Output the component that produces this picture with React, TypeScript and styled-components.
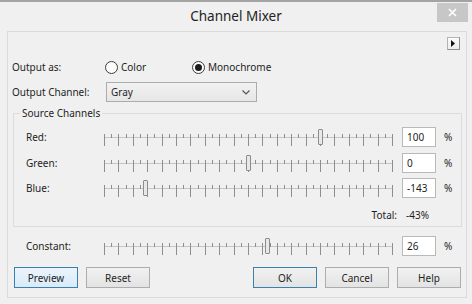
import React from "react";
import styled, { createGlobalStyle } from "styled-components";

const GlobalStyle = createGlobalStyle`
  body {
    margin: 0;
    background: #f0f0f0;
    font-family: "Noto Sans", "Open Sans", sans-serif;
    font-size: 10px;
    color: #1e1e1e;
  }
`;

const Window = styled("div")`
  width: 472px;
  height: 304px;
  box-sizing: border-box;
  border-top: 2px solid #a3a3a3;
  background: #f0f0f0;
  display: flex;
  flex-direction: column;
`;

const TitleBar = styled("div")`
  height: 29px;
  flex-shrink: 0;
  display: grid;
  grid-template-columns: 1fr auto 1fr;
  align-items: start;
`;

const Title = styled("div")`
  grid-column: 2;
  font-size: 13.5px;
  line-height: 28px;
  color: #222;
`;

const CloseButton = styled("div")`
  grid-column: 3;
  justify-self: end;
  margin: 1px 4px 0 0;
  width: 31px;
  height: 19px;
  background: #c7c7c7;
  display: flex;
  align-items: center;
  justify-content: center;
`;

const Panel = styled("div")`
  flex: 1;
  margin: 0 5px 6px 7px;
  border: 1px solid #dadada;
  background: #f0f0f0;
  display: flex;
  flex-direction: column;
`;

const PanelHeader = styled("div")`
  display: flex;
  justify-content: flex-end;
  padding: 5px 6px 0 0;
`;

const ExpandButton = styled("div")`
  width: 13px;
  height: 13px;
  box-sizing: border-box;
  border: 1px solid #b4b4b4;
  border-right-color: #8f8f8f;
  border-bottom-color: #8f8f8f;
  background: linear-gradient(#fbfbfb, #ececec);
  display: flex;
  align-items: center;
  justify-content: center;
`;

const FormRow = styled("div")<{ $top: number }>`
  display: flex;
  align-items: center;
  height: 20px;
  margin-top: ${(p) => p.$top}px;
  padding-left: 4px;
`;

const FormLabel = styled("div")`
  width: 93px;
  flex-shrink: 0;
`;

const RadioOption = styled("label")<{ $width?: number }>`
  display: flex;
  align-items: center;
  gap: 3px;
  width: ${(p) => (p.$width ? `${p.$width}px` : "auto")};
`;

const RadioCircle = styled("span")<{ $checked?: boolean }>`
  width: 13px;
  height: 13px;
  box-sizing: border-box;
  border-radius: 50%;
  border: 1px solid #3a3a3a;
  background: #fcfcfc;
  display: flex;
  align-items: center;
  justify-content: center;
  &::after {
    content: "";
    display: ${(p) => (p.$checked ? "block" : "none")};
    width: 7px;
    height: 7px;
    border-radius: 50%;
    background: #1c1c1c;
  }
`;

const SelectBox = styled("div")`
  margin-left: 1px;
  width: 151px;
  height: 20px;
  box-sizing: border-box;
  border: 1px solid #acacac;
  background: linear-gradient(#f2f2f2, #e6e6e6);
  display: flex;
  align-items: center;
  justify-content: space-between;
  padding: 0 6px 0 4px;
`;

const Group = styled("fieldset")`
  margin: 3px 4px 0 5px;
  padding: 6px 0 3px 6px;
  border: 1px solid #dcdcdc;
  min-width: 0;
`;

const Legend = styled("legend")`
  padding: 0 2px;
  font-size: 10px;
  line-height: 16px;
`;

const ChannelList = styled("div")`
  display: flex;
  flex-direction: column;
  gap: 5.5px;
  padding-left: 6px;
`;

const SliderRow = styled("div")<{ $top?: number; $indent?: number }>`
  display: flex;
  align-items: center;
  height: 20px;
  margin-top: ${(p) => p.$top || 0}px;
  padding-left: ${(p) => p.$indent || 0}px;
`;

const RowLabel = styled("div")`
  width: 78px;
  flex-shrink: 0;
`;

const SliderTrack = styled("div")`
  position: relative;
  width: 289px;
  height: 20px;
  flex-shrink: 0;
  margin-right: 9px;
`;

const Thumb = styled("div")`
  position: absolute;
  top: 2px;
  width: 5px;
  height: 16px;
  box-sizing: border-box;
  border: 1px solid #8c8c8c;
  border-radius: 1px;
  background: #e8e8e8;
`;

const ValueInput = styled("input")`
  width: 34px;
  height: 20px;
  box-sizing: border-box;
  border: 1px solid #b9b9b9;
  background: #fff;
  padding: 0 4px;
  margin: 0 8px 0 0;
  font-family: inherit;
  font-size: 10px;
  color: #1e1e1e;
  outline: none;
`;

const TotalRow = styled("div")`
  display: flex;
  justify-content: flex-end;
  align-items: center;
  height: 16px;
  margin-top: 9px;
`;

const TotalLabel = styled("div")`
  margin-right: 9px;
`;

const TotalValue = styled("div")`
  width: 55px;
`;

const ButtonRow = styled("div")`
  display: flex;
  gap: 8px;
  margin-top: 11px;
  padding: 0 5px 0 6px;
`;

const Button = styled("div")<{ $variant?: "preview" | "default" }>`
  width: 64px;
  height: 21px;
  box-sizing: border-box;
  border: 1px solid
    ${(p) => (p.$variant ? "#3c7fb1" : "#adadad")};
  background: ${(p) =>
    p.$variant === "preview"
      ? "linear-gradient(#eaf4fc, #d9ebf9)"
      : "linear-gradient(#f1f1f1, #e3e3e3)"};
  display: flex;
  align-items: center;
  justify-content: center;
  &:nth-child(3) {
    margin-left: auto;
  }
`;

const MIN = -200;
const MAX = 200;
const PX_PER_UNIT = 0.72;

const Slider = ({ value }: { value: number }) => {
  const ticks = [];
  for (let i = 0; i <= 40; i++) {
    const x = Math.round(i * 7.2) + 0.5;
    ticks.push(
      <line
        key={i}
        x1={x}
        x2={x}
        y1={7}
        y2={i % 2 === 0 ? 19 : 11}
        stroke="#8e8e8e"
        strokeWidth={1}
      />
    );
  }
  const center = 0.5 + (value - MIN) * PX_PER_UNIT;
  return (
    <SliderTrack>
      <svg width="289" height="20">
        <line x1={0} x2={289} y1={10.5} y2={10.5} stroke="#c6c6c6" />
        {ticks}
      </svg>
      <Thumb style={{ left: Math.round(center - 2.5) }} />
    </SliderTrack>
  );
};

const channels = [
  { name: "Red:", value: 100 },
  { name: "Green:", value: 0 },
  { name: "Blue:", value: -143 },
];

const App = () => {
  return (
    <Window>
      <GlobalStyle />
      <TitleBar>
        <Title>Channel Mixer</Title>
        <CloseButton>
          <svg width="9" height="9" viewBox="0 0 9 9">
            <path d="M1 1L8 8M8 1L1 8" stroke="#fff" strokeWidth="1.6" />
          </svg>
        </CloseButton>
      </TitleBar>
      <Panel>
        <PanelHeader>
          <ExpandButton>
            <svg width="5" height="7" viewBox="0 0 5 7">
              <path d="M0 0L4 3.5L0 7Z" fill="#111" />
            </svg>
          </ExpandButton>
        </PanelHeader>
        <FormRow $top={7}>
          <FormLabel>Output as:</FormLabel>
          <RadioOption $width={87}>
            <RadioCircle />
            Color
          </RadioOption>
          <RadioOption>
            <RadioCircle $checked />
            Monochrome
          </RadioOption>
        </FormRow>
        <FormRow $top={5}>
          <FormLabel>Output Channel:</FormLabel>
          <SelectBox>
            <span>Gray</span>
            <svg width="8" height="5" viewBox="0 0 8 5">
              <path d="M0.5 0.5L4 4L7.5 0.5" stroke="#555" fill="none" strokeWidth="1.2" />
            </svg>
          </SelectBox>
        </FormRow>
        <Group>
          <Legend>Source Channels</Legend>
          <ChannelList>
            {channels.map((c) => (
              <SliderRow key={c.name}>
                <RowLabel>{c.name}</RowLabel>
                <Slider value={c.value} />
                <ValueInput readOnly value={c.value} />
                <span>%</span>
              </SliderRow>
            ))}
          </ChannelList>
          <TotalRow>
            <TotalLabel>Total:</TotalLabel>
            <TotalValue>-43%</TotalValue>
          </TotalRow>
        </Group>
        <SliderRow $top={9} $indent={18}>
          <RowLabel>Constant:</RowLabel>
          <Slider value={26} />
          <ValueInput readOnly value={26} />
          <span>%</span>
        </SliderRow>
        <ButtonRow>
          <Button $variant="preview">Preview</Button>
          <Button>Reset</Button>
          <Button $variant="default">OK</Button>
          <Button>Cancel</Button>
          <Button>Help</Button>
        </ButtonRow>
      </Panel>
    </Window>
  );
};

export default App;
